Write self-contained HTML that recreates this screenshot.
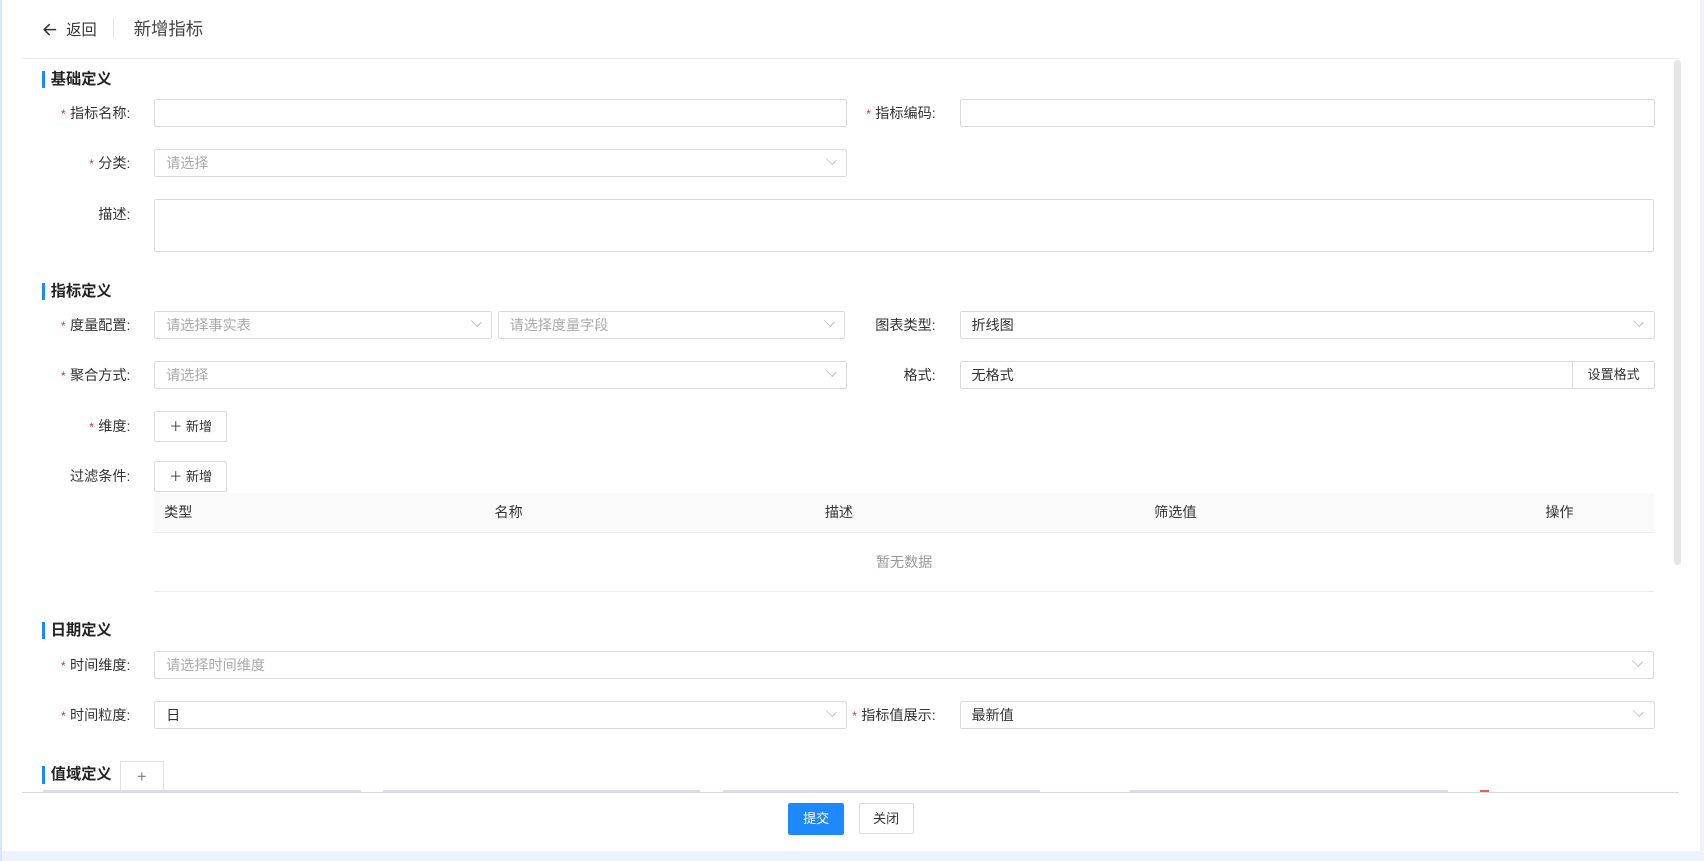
<!DOCTYPE html>
<html><head><meta charset="utf-8"><style>
html,body{margin:0;padding:0;width:1704px;height:861px;overflow:hidden;background:#edf2fb}
#w{zoom:1.08673;position:relative;width:1568px;height:792px;font-family:"Liberation Sans","Noto Sans CJK SC",sans-serif;font-size:13px;color:#333}
.card{position:absolute;left:2px;top:0;width:1562px;height:783px;background:#fff}
.a{position:absolute}
.lb{position:absolute;width:107px;text-align:right;line-height:26px;color:#333}
.lb i{color:#f5222d;font-style:normal;margin-right:4px;font-size:11px}
.in{position:absolute;height:24px;border:1px solid #d9d9d9;border-radius:2px;background:#fff;line-height:24px;padding-left:10px;box-sizing:content-box;color:#333}
.ph{color:#aaa}
.ar{position:absolute;right:10px;width:7px;height:7px;border-right:1px solid #bbb;border-bottom:1px solid #bbb;transform:rotate(45deg) scaleY(.7);top:5px}
.sec{position:absolute;left:39px;font-size:14px;font-weight:bold;color:#222;border-left:3px solid #1e88ff;padding-left:5px;line-height:16px}
.btn{position:absolute;border:1px solid #d9d9d9;border-radius:2px;background:#fff;text-align:center;font-size:12px;line-height:27px;color:#333}
</style></head><body><div id="w">
<div class="a" style="left:0;top:0;width:2px;height:792px;background:#d6e6fb"></div>
<div class="card"></div>
<svg class="a" style="left:39px;top:20px" width="14" height="14" viewBox="0 0 14 14"><path d="M13 7H2M7 2L2 7l5 5" fill="none" stroke="#333" stroke-width="1.4"/></svg>
<div class="a" style="left:61px;top:17px;font-size:14px">返回</div>
<div class="a" style="left:104px;top:17px;width:1px;height:18px;background:#e5e5e5"></div>
<div class="a" style="left:123px;top:15px;font-size:16px;color:#444">新增指标</div>
<div class="a" style="left:20px;top:53px;width:1525px;height:1px;background:#e8eaf2"></div>
<div class="a" style="left:1540px;top:55px;width:7px;height:465px;background:#e6e6e6;border-radius:3px"></div>

<div class="sec" style="top:65px">基础定义</div>
<div class="lb" style="left:13px;top:91px"><i>*</i>指标名称:</div>
<div class="in" style="left:142px;top:91px;width:626px"></div>
<div class="lb" style="left:754px;top:91px"><i>*</i>指标编码:</div>
<div class="in" style="left:883px;top:91px;width:628px"></div>
<div class="lb" style="left:13px;top:137px"><i>*</i>分类:</div>
<div class="in ph" style="left:142px;top:137px;width:626px">请选择<span class="ar"></span></div>
<div class="lb" style="left:13px;top:183px;line-height:28px">描述:</div>
<div class="in" style="left:142px;top:183px;width:1368px;height:47px"></div>

<div class="sec" style="top:260px">指标定义</div>
<div class="lb" style="left:13px;top:286px"><i>*</i>度量配置:</div>
<div class="in ph" style="left:142px;top:286px;width:299px">请选择事实表<span class="ar"></span></div>
<div class="in ph" style="left:458px;top:286px;width:308px">请选择度量字段<span class="ar"></span></div>
<div class="lb" style="left:754px;top:286px">图表类型:</div>
<div class="in" style="left:883px;top:286px;width:628px">折线图<span class="ar"></span></div>
<div class="lb" style="left:13px;top:332px"><i>*</i>聚合方式:</div>
<div class="in ph" style="left:142px;top:332px;width:626px">请选择<span class="ar"></span></div>
<div class="lb" style="left:754px;top:332px">格式:</div>
<div class="in" style="left:883px;top:332px;width:628px">无格式<span class="a" style="left:563px;top:-1px;width:74px;height:24px;border:1px solid #d9d9d9;border-right:0;text-align:center;font-size:12px">设置格式</span></div>
<div class="lb" style="left:13px;top:379px"><i>*</i>维度:</div>
<div class="btn" style="left:142px;top:378px;width:65px">＋ 新增</div>
<div class="lb" style="left:13px;top:425px">过滤条件:</div>
<div class="btn" style="left:142px;top:424px;width:65px">＋ 新增</div>
<div class="a" style="left:142px;top:454px;width:1380px;height:36px;background:#fafafa;border-bottom:1px solid #eee;line-height:36px">
<span class="a" style="left:9px">类型</span><span class="a" style="left:313px">名称</span><span class="a" style="left:617px">描述</span><span class="a" style="left:920px">筛选值</span><span class="a" style="left:1280px">操作</span></div>
<div class="a" style="left:142px;top:508px;width:1380px;text-align:center;color:#999">暂无数据</div>
<div class="a" style="left:142px;top:544px;width:1380px;height:1px;background:#eee"></div>

<div class="sec" style="top:572px">日期定义</div>
<div class="lb" style="left:13px;top:599px"><i>*</i>时间维度:</div>
<div class="in ph" style="left:142px;top:599px;width:1368px">请选择时间维度<span class="ar"></span></div>
<div class="lb" style="left:13px;top:645px"><i>*</i>时间粒度:</div>
<div class="in" style="left:142px;top:645px;width:626px">日<span class="ar"></span></div>
<div class="lb" style="left:754px;top:645px"><i>*</i>指标值展示:</div>
<div class="in" style="left:883px;top:645px;width:628px">最新值<span class="ar"></span></div>

<div class="sec" style="top:705px">值域定义</div>
<div class="a" style="left:110px;top:700px;width:39px;height:28px;border:1px solid #e0e0e0;border-bottom:0;text-align:center;line-height:28px;color:#888;font-size:15px">+</div>
<div class="a" style="left:40px;top:727px;width:292px;height:2px;background:#ddd"></div>
<div class="a" style="left:352px;top:727px;width:292px;height:2px;background:#ddd"></div>
<div class="a" style="left:665px;top:727px;width:292px;height:2px;background:#ddd"></div>
<div class="a" style="left:1040px;top:727px;width:292px;height:2px;background:#ddd"></div>
<div class="a" style="left:1362px;top:727px;width:8px;height:2px;background:#f55"></div>
<div class="a" style="left:20px;top:729px;width:1525px;height:1px;background:#d9dbe3"></div>
<div class="a" style="left:725px;top:739px;width:52px;height:29px;background:#1e88ff;color:#fff;border-radius:2px;text-align:center;line-height:29px;font-size:12px">提交</div>
<div class="btn" style="left:790px;top:739px;width:49px">关闭</div>
</div></body></html>
